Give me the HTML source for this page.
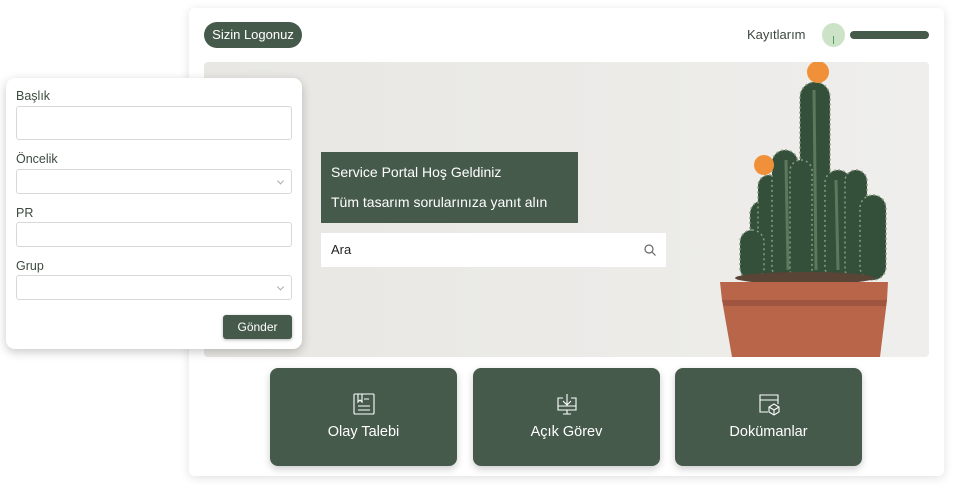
<!DOCTYPE html>
<html><head><meta charset="utf-8"><style>
*{box-sizing:border-box;margin:0;padding:0}
body{width:955px;height:485px;background:#fff;position:relative;overflow:hidden;font-family:"Liberation Sans",sans-serif;color:#3d4a40}
.abs{position:absolute}
.card{left:189px;top:8px;width:755px;height:468px;background:#fff;border-radius:6px;box-shadow:0 2px 10px rgba(0,0,0,.12)}
.logo{left:204px;top:22px;width:98px;height:26px;background:#465a4c;color:#fff;border-radius:13px;font-size:13px;line-height:26px;text-align:center}
.banner{left:204px;top:62px;width:725px;height:295px;background:linear-gradient(90deg,#e8e7e3,#ecebe8 60%,#efeeec);border-radius:4px;overflow:hidden}
.form{left:6px;top:78px;width:296px;height:271px;background:#fff;border-radius:9px;box-shadow:0 3px 10px rgba(0,0,0,.22)}
.lbl{font-size:12.5px;color:#3d4a40;left:16px}
.inp{left:16px;width:276px;border:1px solid #d8d8d8;border-radius:3px;background:#fff}
.chev{position:absolute;right:8px;top:50%;width:5px;height:5px;border-right:1px solid #aaa;border-bottom:1px solid #aaa;transform:translateY(-70%) rotate(45deg)}
.btn{left:223px;top:315px;width:69px;height:24px;background:#465a4c;color:#fff;font-size:12px;text-align:center;line-height:24px;border-radius:3px;box-shadow:0 1px 3px rgba(0,0,0,.3)}
.welcome{left:321px;top:152px;width:257px;height:71px;background:#465a4c;color:#fff;font-size:14px;padding-left:10px}
.search{left:321px;top:233px;width:345px;height:34px;background:#fff;font-size:13px;line-height:34px;padding-left:10px;color:#222}
.tile{top:368px;width:187px;height:98px;background:#465a4c;border-radius:8px;color:#fff;font-size:14.5px;text-align:center;box-shadow:0 3px 8px rgba(0,0,0,.2)}
.tile svg{position:absolute;left:50%;top:24px;margin-left:-12px}
.tile span{position:absolute;left:0;right:0;top:56px}
</style></head><body>
<div class="abs card"></div>
<div class="abs logo">Sizin Logonuz</div>
<div class="abs" style="left:747px;top:27px;font-size:13px;color:#3d4a40">Kayıtlarım</div>
<div class="abs" style="left:822px;top:23px;width:23px;height:24px;border-radius:50%;background:#cde3c8"></div>
<div class="abs" style="left:833px;top:36px;width:1px;height:8px;background:#5a9a6a"></div>
<div class="abs" style="left:850px;top:31px;width:79px;height:8px;border-radius:4px;background:#465a4c"></div>
<div class="abs banner">
<svg width="725" height="295" style="position:absolute;left:0;top:0">
<g transform="translate(-204,-62)">
<g fill="#34503a" stroke="#8a9a80" stroke-width="1.5" stroke-dasharray="2 3">
<rect x="750" y="200" width="28" height="80" rx="14"/>
<rect x="758" y="175" width="22" height="105" rx="11"/>
<rect x="772" y="150" width="26" height="130" rx="13"/>
<rect x="800" y="82" width="30" height="198" rx="15"/>
<rect x="790" y="160" width="22" height="120" rx="11"/>
<rect x="825" y="170" width="26" height="110" rx="13"/>
<rect x="845" y="170" width="22" height="110" rx="11"/>
<rect x="860" y="195" width="26" height="85" rx="13"/>
<rect x="740" y="230" width="24" height="50" rx="12"/>
</g>
<path d="M814 90 L816 270 M786 160 L788 270 M836 180 L838 270" stroke="#6f8a6a" stroke-width="3" fill="none" opacity=".7"/>
<circle cx="818" cy="72" r="11" fill="#f0913a"/>
<circle cx="764" cy="165" r="10" fill="#f0913a"/>
<ellipse cx="805" cy="278" rx="70" ry="6" fill="#5a4436"/>
<path d="M720 282 L888 282 L887 300 L880 357 L732 357 L722 300 Z" fill="#b8654a"/>
<path d="M722 300 L887 300 L886 306 L724 306 Z" fill="#9f5540"/>
</g></svg>
</div>
<div class="abs welcome"><div style="position:absolute;top:12px">Service Portal Hoş Geldiniz</div><div style="position:absolute;top:42px;white-space:nowrap">Tüm tasarım sorularınıza yanıt alın</div></div>
<div class="abs search">Ara<svg width="12" height="12" style="position:absolute;right:10px;top:11px" fill="none" stroke="#666" stroke-width="1.2"><circle cx="5" cy="5" r="4"/><path d="M8 8l3.5 3.5"/></svg></div>
<div class="abs form"></div>
<div class="abs lbl" style="top:89px">Başlık</div>
<div class="abs inp" style="top:106px;height:34px"></div>
<div class="abs lbl" style="top:152px">Öncelik</div>
<div class="abs inp" style="top:169px;height:25px"><i class="chev"></i></div>
<div class="abs lbl" style="top:206px">PR</div>
<div class="abs inp" style="top:222px;height:25px"></div>
<div class="abs lbl" style="top:259px">Grup</div>
<div class="abs inp" style="top:275px;height:25px"><i class="chev"></i></div>
<div class="abs btn">Gönder</div>
<div class="abs tile" style="left:270px"><svg width="24" height="24" fill="none" stroke="#fff" stroke-width="1.1"><rect x="2" y="2" width="20" height="20" rx="1"/><path d="M6 2v8l2-2 2 2V2M12 7h5M6 14h12M6 18h12"/></svg><span>Olay Talebi</span></div>
<div class="abs tile" style="left:473px"><svg width="24" height="24" fill="none" stroke="#fff" stroke-width="1.1"><path d="M8 6H3v12h18V6h-5M12 2v11M8 9l4 4 4-4M3 14h18M12 18v4M8 22h8"/></svg><span>Açık Görev</span></div>
<div class="abs tile" style="left:675px"><svg width="24" height="24" fill="none" stroke="#fff" stroke-width="1.1"><path d="M11 20H3V3h18v9M3 8h18"/><path d="M17 12l5 3v5l-5 3-5-3v-5zM12 15l5 3 5-3M17 18v5"/></svg><span>Dokümanlar</span></div>
</body></html>
